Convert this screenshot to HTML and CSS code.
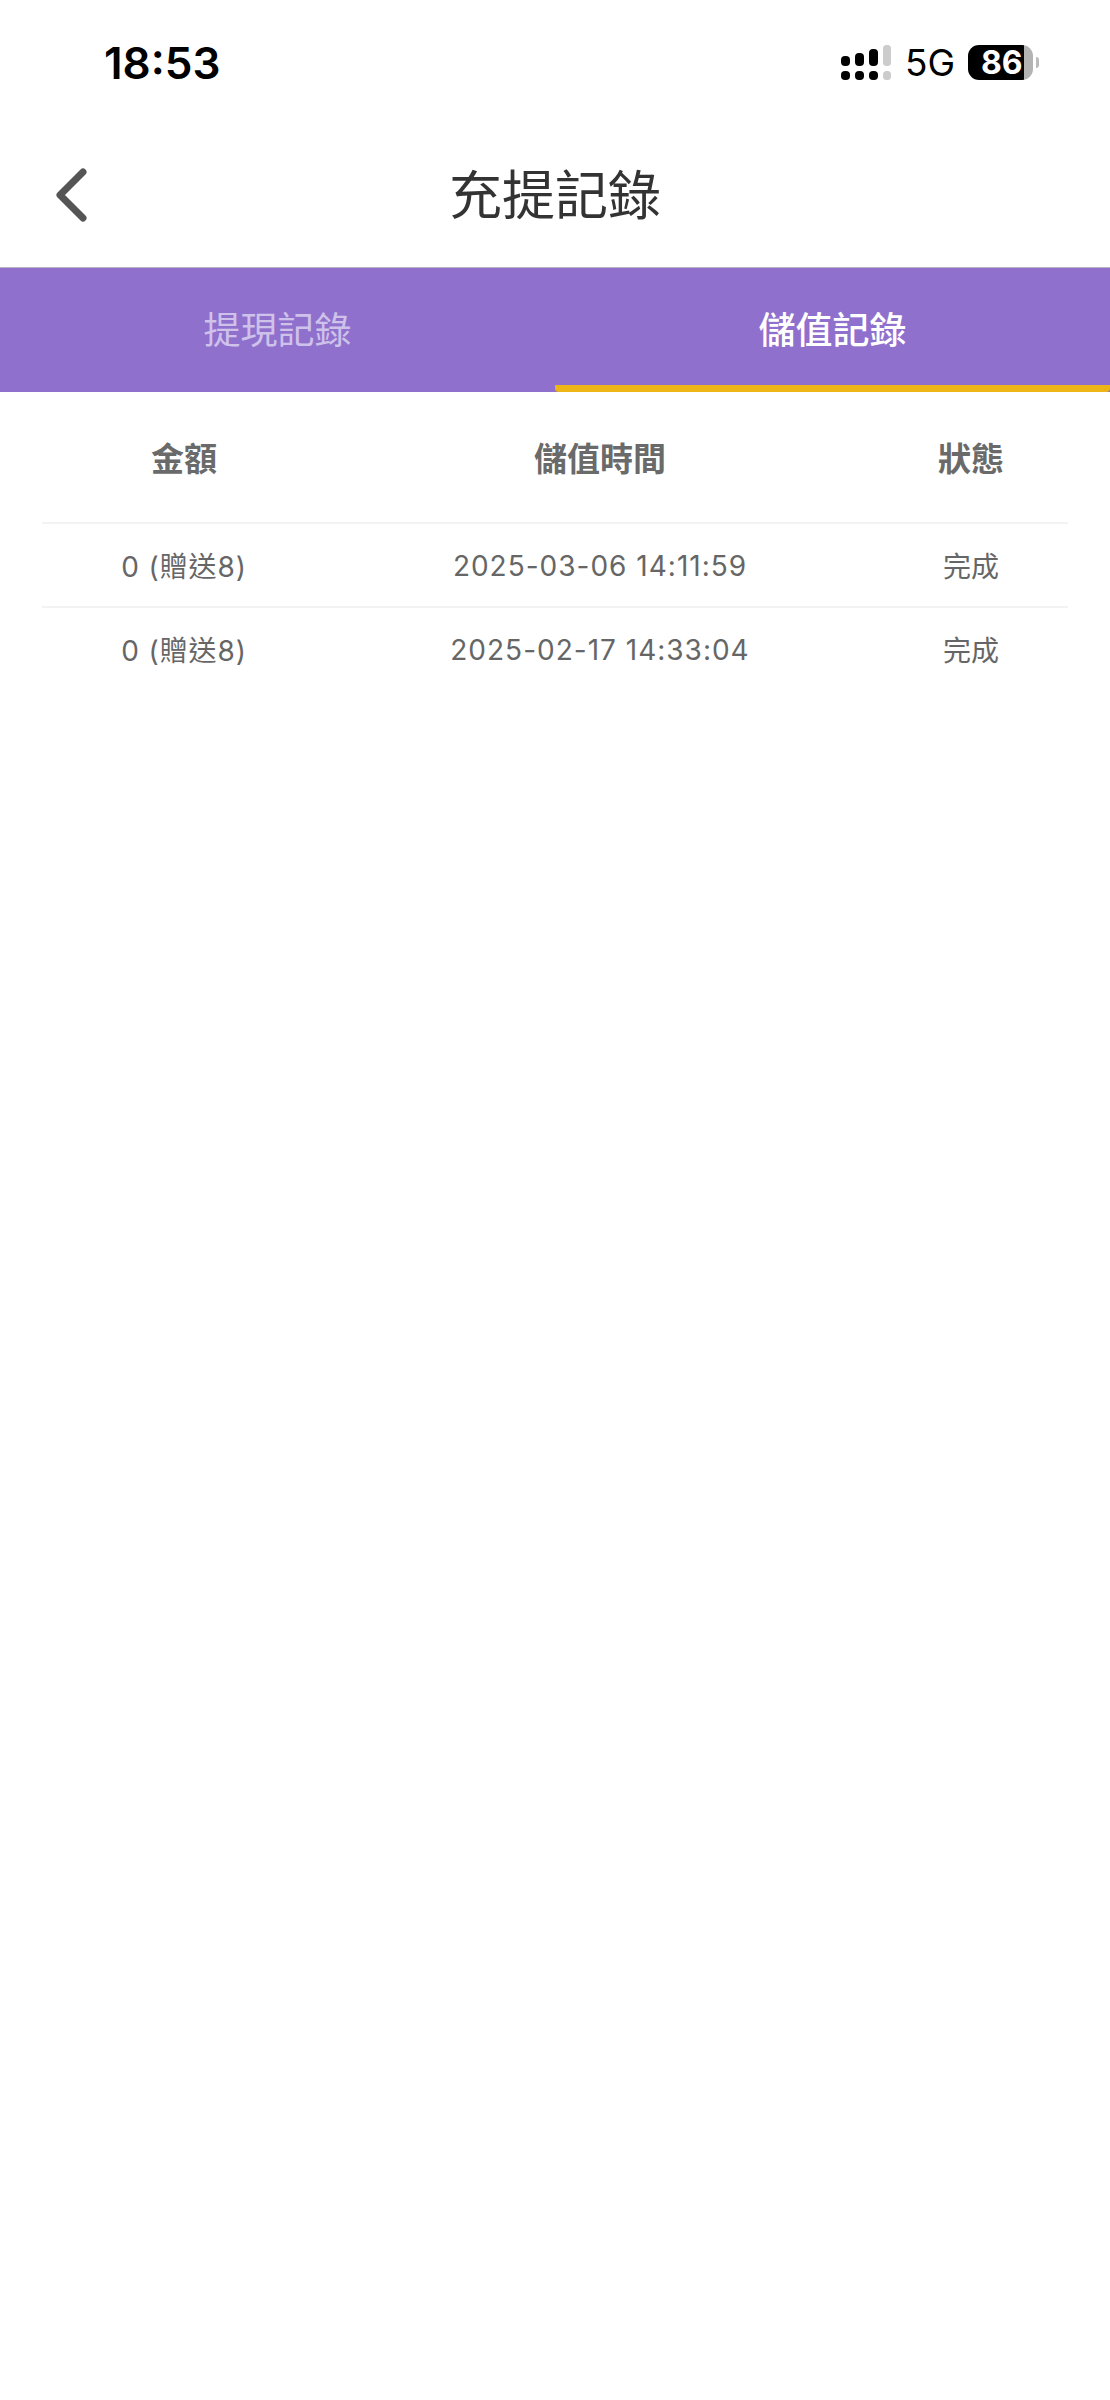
FILE: index.html
```html
<!DOCTYPE html>
<html lang="zh-Hant">
<head>
    <meta charset="UTF-8">
    <meta name="viewport" content="width=device-width, initial-scale=1.0">
    <title>充提記錄</title>
    <link rel="stylesheet" href="styles.css">
</head>
<body>

<div class="status-bar">
    <span class="clock">18:53</span>
    <div class="status-icons">
        <svg class="signal" width="50" height="35" viewBox="0 0 50 35">
            <rect x="0" y="11" width="9" height="10" rx="4" fill="#000"/>
            <rect x="14" y="8" width="9" height="13" rx="4" fill="#000"/>
            <rect x="28" y="4" width="9" height="17" rx="4" fill="#000"/>
            <rect x="42" y="0" width="8" height="21" rx="3.5" fill="#ccc"/>
            <rect x="0" y="26" width="9" height="9" rx="4" fill="#000"/>
            <rect x="14" y="26" width="9" height="9" rx="4" fill="#000"/>
            <rect x="28" y="26" width="9" height="9" rx="4" fill="#000"/>
            <rect x="42" y="26" width="8" height="9" rx="3.5" fill="#ccc"/>
        </svg>
        <span class="network">5G</span>
        <div class="battery">
            <div class="battery-body"><span>86</span></div>
            <div class="battery-tip"></div>
        </div>
    </div>
</div>

<div class="nav">
    <svg class="back" width="32" height="54" viewBox="0 0 32 54">
        <path d="M28 4 L5 27 L28 50" fill="none" stroke="#555" stroke-width="7" stroke-linecap="round" stroke-linejoin="round"/>
    </svg>
    <h1>充提記錄</h1>
</div>

<div class="tabs">
    <div class="tab">提現記錄</div>
    <div class="tab active">儲值記錄</div>
</div>

<div class="records">
    <div class="row head">
        <div>金額</div>
        <div>儲值時間</div>
        <div>狀態</div>
    </div>
    <div class="row">
        <div class="amount">0 (贈送8)</div>
        <div class="date">2025-03-06 14:11:59</div>
        <div>完成</div>
    </div>
    <div class="row">
        <div class="amount">0 (贈送8)</div>
        <div class="date">2025-02-17 14:33:04</div>
        <div>完成</div>
    </div>
</div>

</body>
</html>
```

FILE: styles.css
```css
body {
    margin: 0;
    background-color: #fff;
    font-family: Inter, "Noto Sans CJK TC", sans-serif;
}
.status-bar {
    height: 125px;
    padding: 0 71px 0 104px;
    display: flex;
    justify-content: space-between;
    align-items: center;
    color: #000;
}
.clock {
    font-size: 44px;
    font-weight: 600;
}
.status-icons {
    display: flex;
    align-items: center;
}
.network {
    font-size: 37px;
    margin-left: 14px;
}
.battery {
    display: flex;
    align-items: center;
    margin-left: 13px;
}
.battery-body {
    width: 65px;
    height: 35px;
    box-sizing: border-box;
    border-radius: 11px;
    background: linear-gradient(to right, #000 56px, #b3b3b3 56px);
    color: #fff;
    font-size: 32px;
    font-weight: 700;
    line-height: 35px;
    padding-left: 13px;
}
.battery-tip {
    width: 3px;
    height: 11px;
    margin-left: 3px;
    border-radius: 0 3px 3px 0;
    background: #bbb;
}
.nav {
    height: 143px;
    border-bottom: 1px solid #b9b3c6;
    box-sizing: border-box;
    display: grid;
    grid-template-columns: 1fr auto 1fr;
    align-items: center;
    padding: 0 55px;
}
.back {
    margin-bottom: 2px;
}
h1 {
    margin: 0 0 8px;
    font-size: 53px;
    font-weight: 400;
    color: #333;
}
.tabs {
    display: grid;
    grid-template-columns: 1fr 1fr;
    height: 124px;
    background-color: #8f70cd;
}
.tab {
    display: flex;
    justify-content: center;
    align-items: center;
    padding-bottom: 4px;
    font-size: 37px;
    color: #cfc2ea;
}
.tab.active {
    color: #fff;
    font-weight: 500;
    padding-top: 3px;
    padding-bottom: 0;
    border-bottom: 7px solid #eeb517;
    border-radius: 0 0 4px 4px;
}
.records {
    margin: 0 42px;
}
.row {
    display: grid;
    grid-template-columns: 284px 548px 194px;
    align-items: center;
    height: 84px;
    text-align: center;
    font-size: 28px;
    color: #666;
    border-top: 2px solid #f3f3f3;
    box-sizing: border-box;
}
.row.head {
    height: 130px;
    border-top: none;
    font-size: 33px;
    font-weight: 700;
    color: #6a6a6a;
}
.amount {
    letter-spacing: 0.9px;
}
.date {
    padding-top: 2px;
    letter-spacing: 1px;
}
```
